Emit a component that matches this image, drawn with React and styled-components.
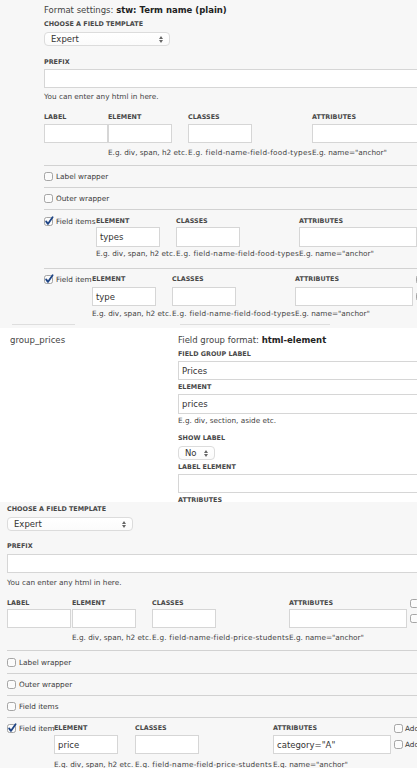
import React from 'react';
import styled, { createGlobalStyle } from 'styled-components';

const GlobalStyle = createGlobalStyle`
  html, body { margin: 0; padding: 0; overflow: hidden; background: #f7f7f7; }
  body { font-family: "DejaVu Sans", Verdana, sans-serif; color: #3b3b3b; }
  * { box-sizing: border-box; }
`;

const Page = styled.div`
  width: 417px;
  height: 768px;
  overflow: hidden;
  display: flex;
  flex-direction: column;
`;

const Panel = styled.section`
  flex: none;
  height: ${p => (p.$h ? `${p.$h}px` : 'auto')};
  padding-top: ${p => p.$pt || 0}px;
  background: ${p => (p.$white ? '#ffffff' : '#f7f7f7')};
  overflow: hidden;
  display: ${p => (p.$split ? 'flex' : 'block')};
`;

const FormArea = styled.div`
  padding-left: ${p => p.$left}px;
  width: ${p => (p.$w ? `${p.$w}px` : 'auto')};
  flex: none;
`;

const Title = styled.div`
  font-size: 8.5px;
  line-height: 13px;
  height: 13px;
  white-space: nowrap;
  color: #444;
  b { color: #222; font-weight: 700; }
`;

const GroupName = styled.div`
  width: 178px;
  padding-left: 10px;
  flex: none;
  font-size: 8.6px;
  line-height: 13px;
  color: #444;
`;

const FieldLabel = styled.div`
  margin-top: ${p => p.$mt || 0}px;
  font-size: 6.4px;
  font-weight: 700;
  text-transform: uppercase;
  line-height: 8px;
  height: 8px;
  color: #484848;
  white-space: nowrap;
`;

const SelectBox = styled.div`
  margin-top: ${p => p.$mt || 0}px;
  width: ${p => p.$w}px;
  height: 14px;
  display: flex;
  align-items: center;
  justify-content: space-between;
  padding: 0 6px 0 6px;
  background: linear-gradient(#ffffff, #fbfbfb);
  border: 1px solid #dcdcdc;
  border-radius: 4px;
  font-size: 8.5px;
  color: #333;
`;

const TextBox = styled.div`
  margin-top: ${p => p.$mt || 0}px;
  width: ${p => p.$w}px;
  height: ${p => p.$h || 19}px;
  display: flex;
  align-items: center;
  padding-left: ${p => (p.$pl ?? 3)}px;
  background: #fff;
  border: 1px solid #d6d6d6;
  font-size: 8.5px;
  color: #333;
  white-space: nowrap;
  flex: none;
`;

const Help = styled.div`
  margin-top: ${p => p.$mt || 0}px;
  font-size: 7.3px;
  line-height: 10px;
  height: 10px;
  color: #444;
  letter-spacing: ${p => p.$ls || 0}px;
  white-space: nowrap;
`;

const ColumnsRow = styled.div`
  display: flex;
  align-items: flex-start;
  margin-top: ${p => p.$mt || 0}px;
`;

const Column = styled.div`
  width: ${p => p.$w}px;
  flex: none;
  display: flex;
  flex-direction: column;
`;

const InputLine = styled.div`
  display: flex;
  align-items: flex-start;
`;

const AddCol = styled.div`
  margin-left: 3px;
  display: flex;
  flex-direction: column;
  flex: none;
`;

const AddLine = styled.div`
  display: flex;
  align-items: center;
  gap: 2px;
  height: ${p => p.$h}px;
  margin-top: ${p => p.$mt || 0}px;
  font-size: 7.3px;
  color: #3b3b3b;
  white-space: nowrap;
`;

const CheckRow = styled.div`
  display: flex;
  align-items: center;
  gap: 3px;
  height: ${p => p.$h}px;
  border-top: 1px solid #d2d2d2;
  font-size: 7.3px;
  color: #3b3b3b;
  white-space: nowrap;
`;

const FieldItemRow = styled.div`
  display: flex;
  align-items: flex-start;
  border-top: 1px solid #d2d2d2;
  padding-top: ${p => p.$pt}px;
  padding-bottom: ${p => p.$pb || 0}px;
`;

const CheckLabel = styled.div`
  width: ${p => p.$w}px;
  flex: none;
  display: flex;
  align-items: center;
  gap: 3px;
  height: 8px;
  font-size: 7.3px;
  color: #3b3b3b;
  white-space: nowrap;
`;

const RowStack = styled.div`
  margin-top: ${p => p.$mt || 0}px;
`;

const FootLines = styled.div`
  display: flex;
  margin-top: ${p => p.$mt || 0}px;
  padding-left: 12px;
  height: 1px;
`;

const FootLine = styled.div`
  width: ${p => p.$w}px;
  margin-right: ${p => p.$mr || 0}px;
  height: 1px;
  background: #dedede;
`;

const CheckSvg = styled.svg`
  flex: none;
  display: block;
  overflow: visible;
`;

const ArrowSvg = styled.svg`
  flex: none;
  display: block;
`;

function Check({ checked }) {
  return (
    <CheckSvg width="9" height="9" viewBox="0 0 9 9">
      <rect x="0.5" y="0.5" width="8" height="8" rx="2" fill="#fbfbfb" stroke="#8f8f8f" strokeWidth="0.8" />
      {checked && (
        <path
          d="M2.1 4.4 L3.9 6.9 L8.6 0.2"
          stroke="#1f4585"
          strokeWidth="1.8"
          fill="none"
          strokeLinecap="round"
          strokeLinejoin="round"
        />
      )}
    </CheckSvg>
  );
}

function Select({ value, w, mt }) {
  return (
    <SelectBox $w={w} $mt={mt}>
      <span>{value}</span>
      <ArrowSvg width="4" height="7" viewBox="0 0 4 7">
        <path d="M0 3 L2 0 L4 3 Z M0 4 L2 7 L4 4 Z" fill="#666" />
      </ArrowSvg>
    </SelectBox>
  );
}

function Col({ w, label, value, help, gap, h, hmt, ls }) {
  return (
    <Column $w={w}>
      <FieldLabel>{label}</FieldLabel>
      <InputLine>
        <TextBox $mt={gap} $w={64} $h={h}>{value}</TextBox>
      </InputLine>
      <Help $mt={hmt} $ls={ls}>{help}</Help>
    </Column>
  );
}

function AttrCol({ w, help, value, gap, h, hmt, addText }) {
  return (
    <Column $w={w}>
      <InputLine>
        <Column $w={118}>
          <FieldLabel>Attributes</FieldLabel>
          <TextBox $mt={gap} $w={118} $h={h}>{value}</TextBox>
          <Help $mt={hmt}>{help}</Help>
        </Column>
        {addText !== undefined && (
          <AddCol>
            <AddLine $h={8}><Check /> {addText}</AddLine>
            <AddLine $h={h} $mt={gap}><Check /> {addText}</AddLine>
          </AddCol>
        )}
      </InputLine>
    </Column>
  );
}

export default function App() {
  return (
    <Page>
      <GlobalStyle />
      <Panel $h={328} $pt={4}>
        <FormArea $left={44}>
          <Title>Format settings: <b>stw: Term name (plain)</b></Title>
          <FieldLabel $mt={3}>Choose a field template</FieldLabel>
          <Select value="Expert" w={126} mt={4} />
          <FieldLabel $mt={12}>Prefix</FieldLabel>
          <TextBox $mt={3} $w={400} $h={19} />
          <Help $mt={4}>You can enter any html in here.</Help>
          <ColumnsRow $mt={11}>
            <Col w={64} label="Label" gap={3} h={19} hmt={5} help="" />
            <Col w={80} label="Element" gap={3} h={19} hmt={5} help="E.g. div, span, h2 etc." />
            <Col w={124} label="Classes" gap={3} h={19} hmt={5} ls={0.27} help="E.g. field-name-field-food-types" />
            <AttrCol w={140} gap={3} h={19} hmt={5} help={'E.g. name="anchor"'} />
          </ColumnsRow>
          <RowStack $mt={7}>
            <CheckRow $h={22}><Check /> Label wrapper</CheckRow>
            <CheckRow $h={22}><Check /> Outer wrapper</CheckRow>
            <FieldItemRow $pt={7} $pb={9}>
              <CheckLabel $w={52}><Check checked /> Field items</CheckLabel>
              <Col w={80} label="Element" value="types" gap={2} h={20} hmt={2} help="E.g. div, span, h2 etc." />
              <Col w={123} label="Classes" gap={2} h={20} hmt={2} ls={0.25} help="E.g. field-name-field-food-types" />
              <AttrCol w={140} gap={2} h={20} hmt={2} help={'E.g. name="anchor"'} />
            </FieldItemRow>
            <FieldItemRow $pt={6}>
              <CheckLabel $w={48}><Check checked /> Field item</CheckLabel>
              <Col w={80} label="Element" value="type" gap={4} h={19} hmt={3} help="E.g. div, span, h2 etc." />
              <Col w={123} label="Classes" gap={4} h={19} hmt={3} ls={0.25} help="E.g. field-name-field-food-types" />
              <AttrCol w={160} gap={4} h={19} hmt={3} help={'E.g. name="anchor"'} addText="Add default classes" />
            </FieldItemRow>
          </RowStack>
        </FormArea>
        <FootLines $mt={5}>
          <FootLine $w={63} $mr={105} />
          <FootLine $w={150} />
        </FootLines>
      </Panel>

      <Panel $h={174} $pt={6} $white $split>
        <GroupName>group_prices</GroupName>
        <FormArea $left={0} $w={239}>
          <Title>Field group format: <b>html-element</b></Title>
          <FieldLabel $mt={3}>Field group label</FieldLabel>
          <TextBox $mt={3} $w={260} $h={19}>Prices</TextBox>
          <FieldLabel $mt={3}>Element</FieldLabel>
          <TextBox $mt={3} $w={260} $h={20}>prices</TextBox>
          <Help $mt={2}>E.g. div, section, aside etc.</Help>
          <FieldLabel $mt={8}>Show label</FieldLabel>
          <Select value="No" w={37} mt={4} />
          <FieldLabel $mt={3}>Label element</FieldLabel>
          <TextBox $mt={3} $w={260} $h={19} />
          <FieldLabel $mt={3}>Attributes</FieldLabel>
        </FormArea>
      </Panel>

      <Panel $pt={3}>
        <FormArea $left={7}>
          <FieldLabel>Choose a field template</FieldLabel>
          <Select value="Expert" w={126} mt={4} />
          <FieldLabel $mt={11}>Prefix</FieldLabel>
          <TextBox $mt={4} $w={420} $h={19} />
          <Help $mt={5}>You can enter any html in here.</Help>
          <ColumnsRow $mt={11}>
            <Col w={65} label="Label" gap={2} h={19} hmt={5} help="" />
            <Col w={80} label="Element" gap={2} h={19} hmt={5} help="E.g. div, span, h2 etc." />
            <Col w={137} label="Classes" gap={2} h={19} hmt={5} ls={0.23} help="E.g. field-name-field-price-students" />
            <AttrCol w={160} gap={2} h={19} hmt={5} help={'E.g. name="anchor"'} addText="Add default classes" />
          </ColumnsRow>
          <RowStack $mt={7}>
            <CheckRow $h={23}><Check /> Label wrapper</CheckRow>
            <CheckRow $h={22}><Check /> Outer wrapper</CheckRow>
            <CheckRow $h={22}><Check /> Field items</CheckRow>
            <FieldItemRow $pt={6}>
              <CheckLabel $w={47}><Check checked /> Field item</CheckLabel>
              <Col w={81} label="Element" value="price" gap={3} h={19} hmt={6} help="E.g. div, span, h2 etc." />
              <Col w={138} label="Classes" gap={3} h={19} hmt={6} ls={0.23} help="E.g. field-name-field-price-students" />
              <AttrCol w={160} gap={3} h={19} hmt={6} value='category="A"' help={'E.g. name="anchor"'} addText="Add default classes" />
            </FieldItemRow>
          </RowStack>
        </FormArea>
      </Panel>
    </Page>
  );
}
